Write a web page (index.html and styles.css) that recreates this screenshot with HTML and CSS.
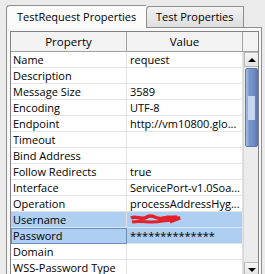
FILE: index.html
```html
<!DOCTYPE html>
<html lang="en">
<head>
    <meta charset="UTF-8">
    <title>TestRequest Properties</title>
    <link rel="stylesheet" href="styles.css">
</head>
<body>
    <div class="tabs">
        <div class="tab active">TestRequest Properties</div>
        <div class="tab">Test Properties</div>
    </div>
    <div class="panel">
        <div class="grid">
            <div class="head">
                <div class="hcell">Property</div>
                <div class="hcell">Value</div>
                <div class="hcell corner"></div>
            </div>
            <div class="body">
                <div class="rows">
                    <div class="row"><div class="cell">Name</div><div class="cell">request</div></div>
                    <div class="row"><div class="cell">Description</div><div class="cell"></div></div>
                    <div class="row"><div class="cell">Message Size</div><div class="cell">3589</div></div>
                    <div class="row"><div class="cell">Encoding</div><div class="cell">UTF-8</div></div>
                    <div class="row"><div class="cell">Endpoint</div><div class="cell">http://vm10800.glo...</div></div>
                    <div class="row"><div class="cell">Timeout</div><div class="cell"></div></div>
                    <div class="row"><div class="cell">Bind Address</div><div class="cell"></div></div>
                    <div class="row"><div class="cell">Follow Redirects</div><div class="cell">true</div></div>
                    <div class="row"><div class="cell">Interface</div><div class="cell">ServicePort-v1.0Soa...</div></div>
                    <div class="row"><div class="cell">Operation</div><div class="cell">processAddressHyg...</div></div>
                    <div class="row selected">
                        <div class="cell">Username</div>
                        <div class="cell">
                            <svg class="scribble" width="52" height="13" viewBox="0 0 52 13">
                                <path d="M1 5 C7 2 11 8 17 4 S27 8 33 5 L47 4" stroke="#e3212b" stroke-width="3.5" fill="none"/>
                                <path d="M2 9 C12 7 22 11 32 8 L43 7 L50 5" stroke="#e3212b" stroke-width="3" fill="none"/>
                                <path d="M36 4 L50 5 L40 9" stroke="#e3212b" stroke-width="3" fill="none"/>
                            </svg>
                        </div>
                    </div>
                    <div class="row selected"><div class="cell focus">Password</div><div class="cell">**************</div></div>
                    <div class="row"><div class="cell">Domain</div><div class="cell"></div></div>
                    <div class="row"><div class="cell">WSS-Password Type</div><div class="cell"></div></div>
                </div>
                <div class="scroll">
                    <div class="sbtn"><span class="arrow up"></span></div>
                    <div class="track">
                        <div class="thumb"><div class="grip"></div></div>
                    </div>
                    <div class="sbtn"><span class="arrow down"></span></div>
                </div>
            </div>
        </div>
    </div>
</body>
</html>
```

FILE: styles.css
```css
body {
    margin: 0;
    height: 274px;
    overflow: hidden;
    background-color: #ebebeb;
    font-family: "Open Sans", sans-serif;
    font-size: 11px;
    color: #000;
}
.tabs {
    display: flex;
    align-items: flex-end;
    padding: 4px 0 0 6px;
    height: 23px;
}
.tab {
    box-sizing: border-box;
    height: 21px;
    width: 98px;
    padding-left: 9px;
    line-height: 19px;
    border: 1px solid #8e8e8e;
    border-bottom: none;
    border-top-left-radius: 4px;
    background: linear-gradient(#f2f2f2, #dedede);
}
.tab.active {
    height: 23px;
    width: 140px;
    padding-left: 10px;
    line-height: 22px;
    background: #fbfbfb;
    border-right: none;
    position: relative;
    z-index: 1;
    margin-bottom: -1px;
}
.panel {
    margin: 0 3px 0 6px;
    padding: 3px 3px 0 3px;
    background: #f8f8f8;
    border: 1px solid #8e8e8e;
    border-bottom: none;
    height: 243px;
    overflow: hidden;
}
.grid {
    width: 249px;
    box-sizing: border-box;
    border: 1px solid #828282;
    border-bottom: none;
    background: #fff;
    height: 243px;
    overflow: hidden;
}
.head {
    display: grid;
    grid-template-columns: 116px 116px 1fr;
    height: 19px;
    background: #f3f3f3;
    border-bottom: 1px solid #a0a0a0;
    font-size: 11.5px;
}
.hcell {
    text-align: center;
    line-height: 19px;
    border-right: 1px solid #a0a0a0;
}
.hcell.corner {
    border-right: none;
}
.body {
    display: flex;
}
.rows {
    width: 232px;
}
.row {
    display: grid;
    grid-template-columns: 116px 116px;
    height: 16px;
    box-sizing: border-box;
    border-bottom: 1px solid #e2e2e2;
}
.cell {
    box-sizing: border-box;
    padding-left: 2px;
    line-height: 15px;
    white-space: nowrap;
    overflow: hidden;
    border-right: 1px solid #e2e2e2;
}
.row .cell + .cell {
    padding-left: 3px;
}
.row.selected {
    background: #aecff1;
    border-bottom-color: #d6e6f6;
}
.cell.focus {
    border: 1px solid #6d8fb6;
    padding-left: 1px;
    line-height: 13px;
    height: 16px;
}
.scribble {
    display: block;
    margin-top: 1px;
}
.scroll {
    width: 15px;
    height: 225px;
    flex-shrink: 0;
    display: flex;
    flex-direction: column;
    background: #ececec;
    border-left: 1px solid #d8d8d8;
}
.sbtn {
    height: 15px;
    flex-shrink: 0;
    box-sizing: border-box;
    border: 1px solid #b9b9b9;
    background: linear-gradient(#f6f6f6, #e2e2e2);
    display: flex;
    align-items: center;
    justify-content: center;
}
.arrow {
    width: 0;
    height: 0;
    border-left: 4px solid transparent;
    border-right: 4px solid transparent;
}
.arrow.up {
    border-bottom: 4px solid #000;
}
.arrow.down {
    border-top: 4px solid #000;
}
.track {
    flex: 1;
    padding-top: 1px;
}
.thumb {
    height: 79px;
    margin: 0 1px;
    box-sizing: border-box;
    border: 1px solid #5a78b0;
    border-radius: 2px;
    background: linear-gradient(90deg, #aac0e6, #7895cc 30%, #6f8dc5 70%, #5b78b2);
    display: flex;
    align-items: center;
    justify-content: center;
}
.grip {
    width: 7px;
    height: 24px;
    background-image: radial-gradient(circle, #c8d6f0 0.8px, transparent 1px);
    background-size: 2px 2px;
}
```
